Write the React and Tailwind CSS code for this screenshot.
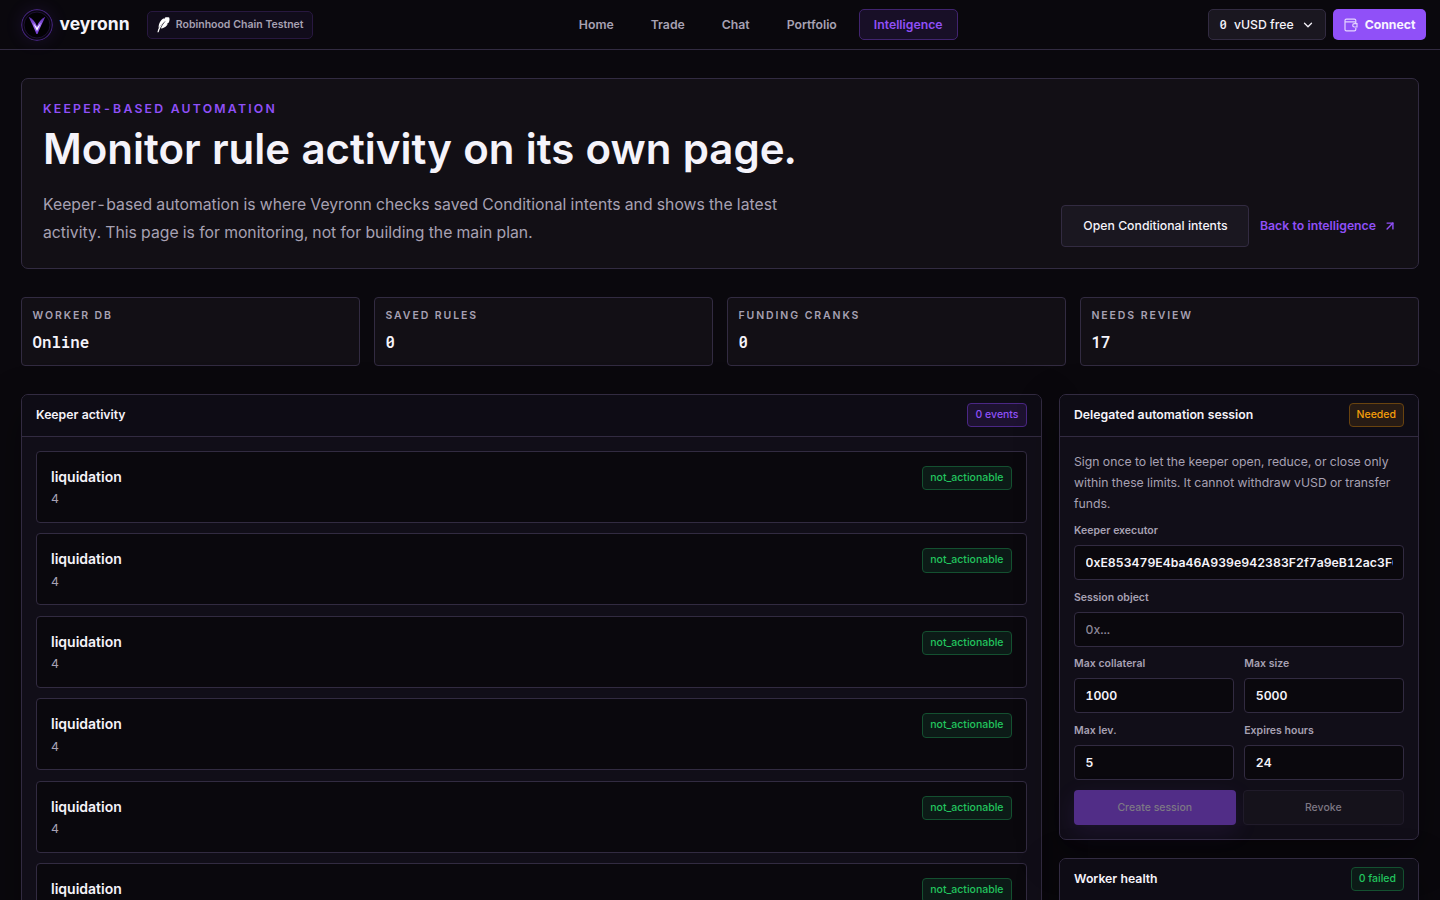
import clsx from "clsx";
import { ArrowUpRight, ChevronDown } from "lucide-react";

const NAV_ITEMS = ["Home", "Trade", "Chat", "Portfolio", "Intelligence"];

const STATS = [
  { label: "Worker DB", value: "Online" },
  { label: "Saved rules", value: "0" },
  { label: "Funding cranks", value: "0" },
  { label: "Needs review", value: "17" },
];

const EVENTS = Array.from({ length: 6 }, (_, id) => ({
  id,
  title: "liquidation",
  detail: "4",
  status: "not_actionable",
}));

const BADGE_TONES = {
  purple: "border-[#4a2784] bg-[#1d1230] text-[#9050f8]",
  green: "border-[#145030] bg-[#0c1b17] text-[#22c55e]",
  amber: "border-[#69430f] bg-[#271b14] text-[#f59e0b]",
};

const Badge = ({ tone, className, children }) => (
  <span
    className={clsx(
      "flex h-7 shrink-0 items-center rounded-[4px] border px-[7px] text-[10.5px] font-medium",
      BADGE_TONES[tone],
      className
    )}
  >
    {children}
  </span>
);

const Logo = () => (
  <svg viewBox="0 0 32 32" className="size-[32px] rounded-full shadow-[0_0_18px_rgba(143,77,255,0.12)]">
    <defs>
      <linearGradient id="wing" x1="0" y1="0" x2="0" y2="1">
        <stop offset="0" stopColor="#5427a6" />
        <stop offset="0.55" stopColor="#a06af5" />
        <stop offset="1" stopColor="#6a35c8" />
      </linearGradient>
    </defs>
    <circle cx="16" cy="16" r="15.3" fill="#08060d" stroke="#43247a" strokeWidth="1.2" />
    <circle cx="16" cy="16" r="13" fill="#020104" stroke="#24143f" strokeWidth="0.8" />
    <path
      d="M7.6 7.8C11.4 9.4 14.2 12.8 16 17.2 17.8 12.8 20.6 9.4 24.4 7.8 22.6 11.6 19.4 17.8 16.6 25H15.4C12.6 17.8 9.4 11.6 7.6 7.8Z"
      fill="url(#wing)"
    />
    <path d="M12.2 14 16 18.8 19.8 14 16 22Z" fill="#fff" />
  </svg>
);

const FeatherIcon = () => (
  <svg viewBox="0 0 13 16" width="13" height="16" fill="#fff">
    <path d="M0.4 15.2C1 11.4 3.6 7.2 7.6 4.2 5 7.4 2.8 11.2 1.6 15.2Z" />
    <path d="M1.6 9.4C1.8 6.4 3.6 3.2 6.2 1.4L7.6 1.8 8 .6C9.6.1 11.2.1 12.2.5 12.8 2.2 12.6 4 11.8 5.6L9.6 7.2 10.8 7.2C9.6 9.2 7.8 10.4 5.6 11.2L3.8 11.6C4.8 9 6.8 6.2 9 3.8 6 5.6 3.4 8.4 1.8 11.2Z" />
  </svg>
);

const WalletIcon = () => (
  <svg viewBox="0 0 14 14" width="14" height="14" fill="none" stroke="#e4d4ff" strokeWidth="1.2">
    <path d="M11.8 4.4V2.6A1.4 1.4 0 0 0 10.4 1.2H2.4A1.4 1.4 0 0 0 1 2.6V11.4A1.4 1.4 0 0 0 2.4 12.8H10.4A1.4 1.4 0 0 0 11.8 11.4V10" />
    <path d="M1 3.8H10.6A1.2 1.2 0 0 1 11.8 5" />
    <path d="M13 5.6H10.4A1.7 1.7 0 0 0 10.4 9H13Z" />
  </svg>
);

const Panel = ({ title, badge, children }) => (
  <section className="rounded-[7px] border border-[#322b41] bg-[#110e18] shadow-[0_14px_42px_rgba(0,0,0,0.35)]">
    <header className="flex h-[42.1px] items-center justify-between rounded-t-[6px] border-b border-[#322b41] bg-[#0e0c15] px-4">
      <h2 className="pb-px text-[12.25px] font-semibold leading-5 text-[#f5f3fa]">{title}</h2>
      {badge}
    </header>
    {children}
  </section>
);

const Field = ({ label, value, placeholder }) => (
  <label className="block min-w-0">
    <span className="mb-2 block text-[10.5px] font-semibold leading-[14px] text-[#a7a1b3]">{label}</span>
    <input
      readOnly
      defaultValue={value}
      placeholder={placeholder}
      className="block h-10 w-full rounded-[4px] border border-[#322b41] bg-[#0a080d] px-3 text-[12.25px] font-semibold text-[#f5f3fa] placeholder:font-medium placeholder:text-[#8b8698]"
    />
  </label>
);

const Header = () => (
  <header className="flex h-[50px] items-center justify-between border-b border-[#322b41] bg-[#0a080d] pl-6 pr-4">
    <div className="flex items-center">
      <Logo />
      <span className="ml-[6.5px] text-[17.5px] font-bold leading-7 text-[#f5f3fa]">veyronn</span>
      <div className="ml-[17.5px] flex h-8 items-center gap-[6px] rounded-[5px] border border-[#281840] bg-[#110c1b] px-[8.75px] text-[10.5px] font-semibold text-[#a7a1b3]">
        <FeatherIcon />
        Robinhood Chain Testnet
      </div>
    </div>
    <nav className="flex items-center gap-2 text-[12.25px] font-semibold">
      {NAV_ITEMS.map((item) => (
        <a
          key={item}
          className={clsx(
            "flex h-[31px] items-center rounded-[5px] border px-[14px] pt-px",
            item === "Intelligence"
              ? "border-[#41246f] bg-[#180f27] text-[#9050f8]"
              : "border-transparent text-[#a7a1b3]"
          )}
        >
          {item}
        </a>
      ))}
    </nav>
    <div className="flex items-center justify-end gap-2">
      <button className="flex h-[31px] items-center gap-2 rounded-[5px] border border-[#322b41] bg-[#1a1720] px-[10.5px] pt-px text-[12.25px] font-medium text-[#f5f3fa]">
        <span className="-mt-px font-mono">0</span>
        vUSD free
        <ChevronDown size={14} strokeWidth={2.2} />
      </button>
      <button className="flex h-[31px] items-center gap-[7px] rounded-[5px] bg-[#9050f8] px-[10.5px] pt-px text-[12.25px] font-bold text-[#f8f4ff]">
        <WalletIcon />
        Connect
      </button>
    </div>
  </header>
);

const App = () => (
  <div className="h-[900px] overflow-hidden bg-[#0a080d] font-sans tabular-nums text-[#f5f3fa] [--font-mono:'Roboto_Mono','JetBrains_Mono','Liberation_Mono',monospace] [--font-sans:Inter,sans-serif] [--spacing:3.5px]">
    <Header />

    <main className="flex flex-col gap-8 px-6 pt-8">
      <section className="flex h-[191px] items-end justify-between rounded-[7px] border border-[#322b41] bg-[#120f15] p-6">
        <div>
          <p className="text-[12.25px] font-semibold uppercase leading-5 tracking-[0.18em] text-[#9050f8]">
            Keeper-based automation
          </p>
          <h1 className="mt-[7.5px] text-[42px] font-semibold leading-[48px] text-[#f5f3fa]">
            Monitor rule activity on its own page.
          </h1>
          <p className="mt-[18.5px] w-[784px] text-[15.75px] leading-8 text-[#a7a1b3]">
            Keeper-based automation is where Veyronn checks saved Conditional intents and shows the latest activity.
            This page is for monitoring, not for building the main plan.
          </p>
        </div>
        <div className="flex items-center gap-[11px] text-[12.25px] font-medium">
          <button className="h-[42px] w-[188px] rounded-[4px] border border-[#322b41] bg-[#1a1720] pl-px">
            Open Conditional intents
          </button>
          <a className="flex items-center gap-2 font-semibold text-[#9050f8]">
            Back to intelligence
            <ArrowUpRight size={14} strokeWidth={2.4} />
          </a>
        </div>
      </section>

      <section className="grid grid-cols-4 gap-4">
        {STATS.map(({ label, value }) => (
          <div key={label} className="rounded-[4px] border border-[#322b41] bg-[#120f15] p-3">
            <p className="text-[10.5px] font-semibold uppercase leading-[14px] tracking-[0.18em] text-[#a7a1b3]">
              {label}
            </p>
            <p className="mt-2 font-mono text-[15.75px] font-semibold leading-7">{value}</p>
          </div>
        ))}
      </section>

      <div className="grid grid-cols-[minmax(0,1fr)_360px] items-start gap-5">
        <Panel title="Keeper activity" badge={<Badge tone="purple" className="pb-px">0 events</Badge>}>
          <div className="flex flex-col gap-3 p-4">
            {EVENTS.map((event) => (
              <article
                key={event.id}
                className="flex items-start justify-between rounded-[4px] border border-[#322b41] bg-[#0a080d] p-4"
              >
                <div>
                  <h3 className="text-[14px] font-semibold leading-6">{event.title}</h3>
                  <p className="mt-1 text-[12.25px] leading-5 text-[#a7a1b3]">{event.detail}</p>
                </div>
                <Badge tone="green">{event.status}</Badge>
              </article>
            ))}
          </div>
        </Panel>

        <aside className="flex flex-col gap-5">
          <Panel
            title="Delegated automation session"
            badge={<Badge tone="amber" className="pb-px">Needed</Badge>}
          >
            <div className="p-4">
              <p className="text-[12.25px] leading-6 text-[#a7a1b3]">
                Sign once to let the keeper open, reduce, or close only within these limits. It cannot withdraw vUSD or
                transfer funds.
              </p>
              <div className="mt-3 flex flex-col gap-3">
                <Field label="Keeper executor" value="0xE853479E4ba46A939e942383F2f7a9eB12ac3F6d" />
                <Field label="Session object" placeholder="0x..." />
                <div className="grid grid-cols-2 gap-x-3 gap-y-3">
                  <Field label="Max collateral" value="1000" />
                  <Field label="Max size" value="5000" />
                  <Field label="Max lev." value="5" />
                  <Field label="Expires hours" value="24" />
                </div>
              </div>
              <div className="mt-3 grid grid-cols-2 gap-2 text-[10.5px] font-medium text-[#7d7884]">
                <button className="h-10 rounded-[4px] bg-[#512d87] shadow-[0_7px_24px_rgba(143,77,255,0.1)]">
                  Create session
                </button>
                <button className="h-10 rounded-[4px] border border-[#201b2a] bg-[#15121b]">Revoke</button>
              </div>
            </div>
          </Panel>

          <Panel title="Worker health" badge={<Badge tone="green" className="pb-px">0 failed</Badge>}>
            <div className="h-40" />
          </Panel>
        </aside>
      </div>
    </main>
  </div>
);

export default App;
